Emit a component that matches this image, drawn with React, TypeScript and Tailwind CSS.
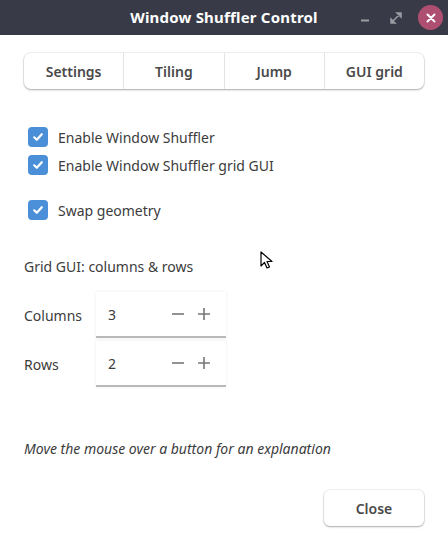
import React from 'react';

const font = { fontFamily: '"Noto Sans", "Open Sans", sans-serif' };

const Check = ({ label }: { label: string }) => (
	<label className="flex items-center gap-[10px] h-[20px]">
		<span className="w-[20px] h-[20px] rounded-[4px] bg-[#4a8fd8] flex items-center justify-center">
			<svg width="12" height="12" viewBox="0 0 12 12">
				<path d="M2.2 6.3 L4.8 8.8 L9.8 3.2" fill="none" stroke="#fff" strokeWidth="2.2" strokeLinecap="round" strokeLinejoin="round" />
			</svg>
		</span>
		<span className="text-[14px] text-[#3c3c3c]">{label}</span>
	</label>
);

const Spin = ({ label, value }: { label: string; value: number }) => (
	<div className="flex items-center">
		<span className="w-[72px] text-[14px] text-[#3c3c3c]">{label}</span>
		<div className="w-[130px] h-[46px] bg-white flex items-center pl-[12px] border-b-2 border-[#b9b9b9] shadow-[0_0_3px_rgba(0,0,0,0.08)]">
			<span className="flex-1 text-[14px] text-[#3c3c3c]">{value}</span>
			<span className="w-[26px] flex justify-center">
				<svg width="12" height="12" viewBox="0 0 12 12">
					<path d="M0 6 H12" stroke="#777" strokeWidth="1.6" />
				</svg>
			</span>
			<span className="w-[26px] flex justify-center mr-[9px]">
				<svg width="12" height="12" viewBox="0 0 12 12">
					<path d="M0 6 H12 M6 0 V12" stroke="#777" strokeWidth="1.6" />
				</svg>
			</span>
		</div>
	</div>
);

export default function App() {
	const tabs = ['Settings', 'Tiling', 'Jump', 'GUI grid'];
	return (
		<div style={font} className="relative w-[448px] h-[543px] bg-white flex flex-col overflow-hidden">
			{/* title bar */}
			<div className="h-[35px] bg-[#383b47] flex items-center relative">
				<span className="absolute left-0 right-0 text-center text-[15px] font-bold text-white tracking-[0.2px]">
					Window Shuffler Control
				</span>
				<div className="ml-auto flex items-center gap-[14px] pr-[5px] relative">
					<svg width="16" height="16" viewBox="0 0 16 16">
						<path d="M3 10.5 H11" stroke="#9a9ca4" strokeWidth="2" />
					</svg>
					<svg width="16" height="16" viewBox="0 0 16 16">
						<path d="M9 3 H13 V7 Z M7 13 H3 V9 Z M12 4 L4 12" fill="#9a9ca4" stroke="#9a9ca4" strokeWidth="1.5" />
					</svg>
					<span className="w-[25px] h-[25px] rounded-full bg-[#ae4f72] flex items-center justify-center">
						<svg width="10" height="10" viewBox="0 0 10 10">
							<path d="M1.5 1.5 L8.5 8.5 M8.5 1.5 L1.5 8.5" stroke="#fff" strokeWidth="2" strokeLinecap="round" />
						</svg>
					</span>
				</div>
			</div>

			{/* tabs */}
			<div className="mx-[24px] mt-[18px] h-[36px] flex rounded-[7px] bg-white shadow-[0_1px_2px_rgba(0,0,0,0.3),0_0_0_1px_rgba(0,0,0,0.05)]">
				{tabs.map((t, i) => (
					<div
						key={t}
						className={
							'flex-1 flex items-center justify-center text-[14px] font-semibold text-[#4a4a4a]' +
							(i > 0 ? ' border-l border-[#e4e4e4]' : '')
						}>
						{t}
					</div>
				))}
			</div>

			{/* checkboxes */}
			<div className="pl-[28px] mt-[38px] flex flex-col gap-[8px]">
				<Check label="Enable Window Shuffler" />
				<Check label="Enable Window Shuffler grid GUI" />
			</div>
			<div className="pl-[28px] mt-[25px]">
				<Check label="Swap geometry" />
			</div>

			<div className="pl-[24px] mt-[37px] text-[14px] text-[#3c3c3c] h-[20px] leading-[20px]">Grid GUI: columns &amp; rows</div>

			<div className="pl-[24px] mt-[15px] flex flex-col gap-[3px]">
				<Spin label="Columns" value={3} />
				<Spin label="Rows" value={2} />
			</div>

			<div className="pl-[24px] mt-[52px] text-[14px] italic text-[#3c3c3c] h-[20px] leading-[20px]">
				Move the mouse over a button for an explanation
			</div>

			<div className="flex justify-end pr-[24px] mt-[31px]">
				<div className="w-[100px] h-[36px] rounded-[6px] bg-white flex items-center justify-center text-[14px] font-semibold text-[#4a4a4a] shadow-[0_1px_2px_rgba(0,0,0,0.3),0_0_0_1px_rgba(0,0,0,0.05)]">
					Close
				</div>
			</div>

			{/* mouse pointer */}
			<svg className="absolute left-[260px] top-[251px]" width="14" height="20" viewBox="0 0 14 20">
				<path d="M1 1 V15 L4.5 11.5 L7 17 L9.5 16 L7 10.5 H12 Z" fill="#fff" stroke="#000" strokeWidth="1.2" strokeLinejoin="round" />
			</svg>
		</div>
	);
}
